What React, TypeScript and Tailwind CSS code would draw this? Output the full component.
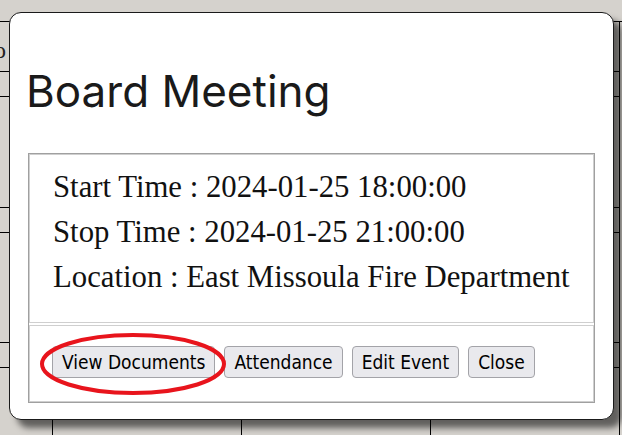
import React from 'react';

const cols = ['w-[53px]', 'w-[189px]', 'w-[189px]', 'w-[189px]'];
const rows = ['h-[50px]', 'h-[25px]', 'h-[111px]', 'h-[25px]', 'h-[110px]', 'h-[25px]', 'h-[110px]'];

const CalendarBehind = () => (
  <div className="mt-[21px] border-t border-black">
    {rows.map((h, r) => (
      <div key={r} className={`flex ${h}`}>
        {cols.map((w, c) => (
          <div key={c} className={`${w} shrink-0 border-r border-b border-black`}>
            {r === 0 && c === 0 && (
              <span className="block mt-[10px] -ml-[6px] font-['Liberation_Serif',serif] text-[24px] text-[#222]">o</span>
            )}
          </div>
        ))}
      </div>
    ))}
  </div>
);

const buttons = ['View Documents', 'Attendance', 'Edit Event', 'Close'];

const App = () => {
  return (
    <div className="relative w-[622px] h-[435px] overflow-hidden bg-[#d5d2cd]">
      <CalendarBehind />

      {/* Event dialog */}
      <div className="absolute left-[9px] top-[12px] w-[605px] h-[408px] rounded-[12px] border border-[#1a1a1a] bg-white px-[18px] shadow-[8px_8px_6px_rgba(0,0,0,0.55)]">
        <h1 className="pt-[52px] mb-[36px] -ml-[2px] font-['Inter',sans-serif] text-[44px] leading-[52px] font-normal text-[#1a1a1a]">
          Board Meeting
        </h1>

        <div className="flex flex-col gap-[2px] border border-[#a0a0a0]">
          <div className="border border-[#cfcfcf] pl-[23px] pt-[10px] pb-[22px] font-['Liberation_Serif',serif] text-[30.75px] leading-[45px] text-[#111]">
            <div>Start Time : 2024-01-25 18:00:00</div>
            <div>Stop Time : 2024-01-25 21:00:00</div>
            <div>Location : East Missoula Fire Department</div>
          </div>
          <div className="flex gap-[9px] border border-[#cfcfcf] pl-[22px] pt-[20px] pb-[23px]">
            {buttons.map((b) => (
              <button
                key={b}
                className="h-[32px] px-[9px] rounded-[4px] border border-[#a3a3a8] bg-[#e9e9ed] font-['DejaVu_Sans_Condensed','Liberation_Sans',Arial,sans-serif] text-[19px] leading-none text-black"
              >
                {b}
              </button>
            ))}
          </div>
        </div>
      </div>

      {/* annotation */}
      <svg className="absolute left-[38px] top-[331px]" width="190" height="66" viewBox="0 0 190 66">
        <ellipse cx="95" cy="33" rx="91" ry="29" fill="none" stroke="#e8141c" strokeWidth="4" />
      </svg>
    </div>
  );
};

export default App;
